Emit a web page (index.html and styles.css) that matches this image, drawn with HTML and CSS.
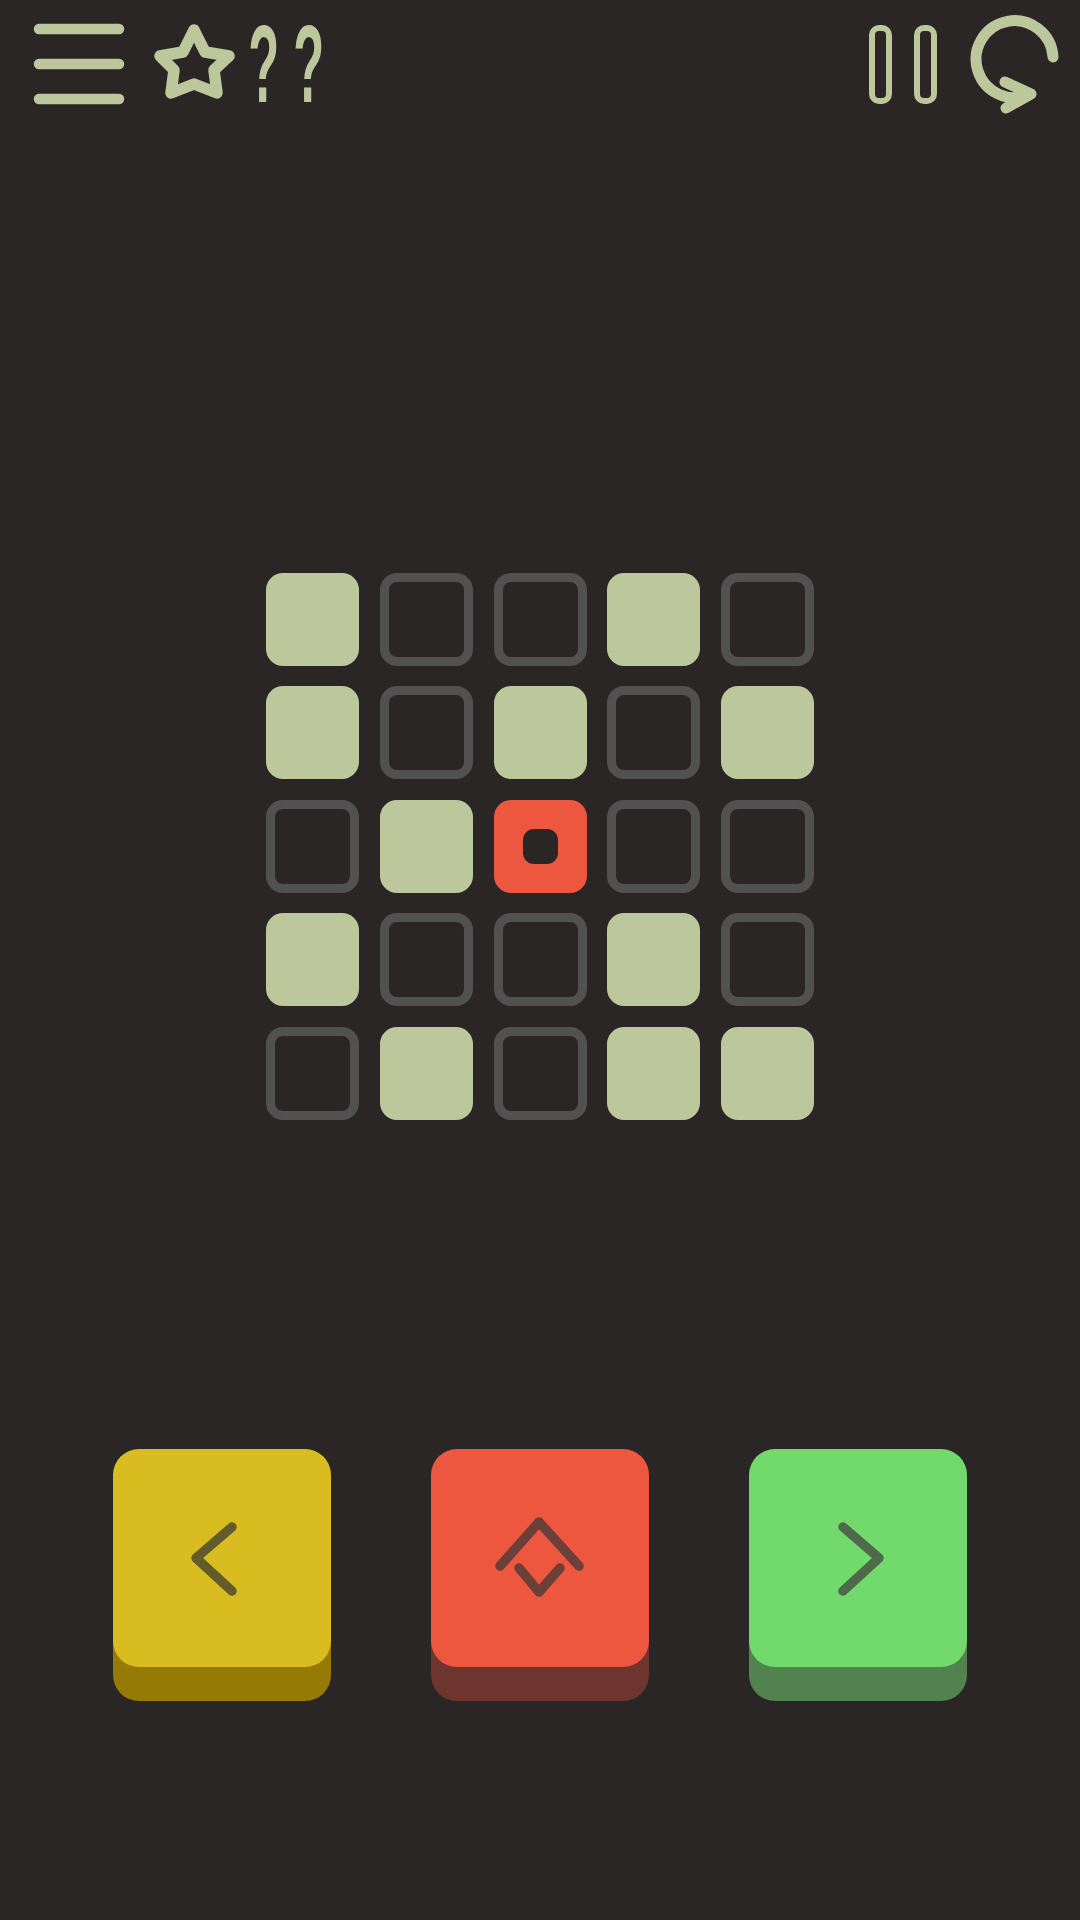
FILE: index.html
```html
<!DOCTYPE html>
<html lang="en">
<head>
    <meta charset="UTF-8">
    <meta name="viewport" content="width=device-width, initial-scale=1.0">
    <title>Puzzle</title>
    <link rel="stylesheet" href="styles.css">
</head>
<body>
    <header class="topbar">
        <div class="topbar-left">
            <svg class="icon-menu" width="135" height="130" viewBox="0 0 135 130">
                <path d="M39 29H119M39 64H119M39 99H119" />
            </svg>
            <svg class="icon-star" width="100" height="130" viewBox="145 0 100 130">
                <path d="M194 30L205 52L229 56L214 70L217 93L194 84L171 93L174 70L160 56L183 52Z" />
            </svg>
            <div class="hints"><span>?</span><span>?</span></div>
        </div>
        <div class="topbar-right">
            <div class="pause"><span></span><span></span></div>
            <svg class="icon-replay" width="120" height="130" viewBox="960 0 120 130">
                <path d="M1053 57A38.5 38.5 0 1 0 1031 94M1005 82L1031 94L1006 108" />
            </svg>
        </div>
    </header>

    <main class="board">
        <div class="cell on"></div>
        <div class="cell"></div>
        <div class="cell"></div>
        <div class="cell on"></div>
        <div class="cell"></div>

        <div class="cell on"></div>
        <div class="cell"></div>
        <div class="cell on"></div>
        <div class="cell"></div>
        <div class="cell on"></div>

        <div class="cell"></div>
        <div class="cell on"></div>
        <div class="cell player"><span class="player-dot"></span></div>
        <div class="cell"></div>
        <div class="cell"></div>

        <div class="cell on"></div>
        <div class="cell"></div>
        <div class="cell"></div>
        <div class="cell on"></div>
        <div class="cell"></div>

        <div class="cell"></div>
        <div class="cell on"></div>
        <div class="cell"></div>
        <div class="cell on"></div>
        <div class="cell on"></div>
    </main>

    <section class="controls">
        <button class="key key-yellow" aria-label="Left">
            <svg width="218" height="218" viewBox="0 0 218 218"><path d="M119 78L83 109L119 142" /></svg>
        </button>
        <button class="key key-red" aria-label="Flip">
            <svg width="218" height="218" viewBox="0 0 218 218"><path d="M69 117L108 73L148 117M88 119L108 143L129 119" /></svg>
        </button>
        <button class="key key-green" aria-label="Right">
            <svg width="218" height="218" viewBox="0 0 218 218"><path d="M94 78L130 109L94 142" /></svg>
        </button>
    </section>
</body>
</html>
```

FILE: styles.css
```css
body {
    margin: 0;
    height: 1920px;
    overflow: hidden;
    background-color: #2b2626;
    font-family: 'Liberation Sans', Arial, sans-serif;
}

svg {
    display: block;
}

svg path {
    fill: none;
    stroke-linecap: round;
    stroke-linejoin: round;
}

.topbar {
    display: flex;
    justify-content: space-between;
    height: 130px;
}
.topbar-left,
.topbar-right {
    display: flex;
}
.icon-menu path {
    stroke: #bcc79c;
    stroke-width: 10.5;
}
.icon-star {
    margin-left: 10px;
}
.icon-star path {
    stroke: #bcc79c;
    stroke-width: 11.5;
}
.hints {
    display: flex;
    margin-left: -9px;
    height: 130px;
}
.hints span {
    width: 45px;
    height: 130px;
    line-height: 128px;
    text-align: center;
    font-weight: bold;
    font-size: 110px;
    color: #bcc79c;
    transform: scaleX(0.46);
}

.pause {
    display: flex;
    gap: 22px;
    padding-top: 25px;
    margin-right: 23px;
}
.pause span {
    display: block;
    box-sizing: border-box;
    width: 23px;
    height: 79px;
    border: 6.5px solid #bcc79c;
    border-radius: 10px;
}
.icon-replay path {
    stroke: #bcc79c;
    stroke-width: 11;
}

.board {
    display: grid;
    grid-template-columns: repeat(5, 93px);
    grid-auto-rows: 93px;
    column-gap: 20.75px;
    row-gap: 20.5px;
    padding-left: 266px;
    margin-top: 442.6px;
}
.cell {
    box-sizing: border-box;
    border: 9px solid #515151;
    border-radius: 17px;
}
.cell.on {
    border: none;
    background-color: #bcc79c;
}
.cell.player {
    display: flex;
    align-items: center;
    justify-content: center;
    border: none;
    background-color: #ee573f;
}
.player-dot {
    width: 35px;
    height: 35px;
    border-radius: 11px;
    background-color: #2b2626;
}

.controls {
    display: flex;
    justify-content: center;
    gap: 100px;
    margin-top: 329px;
}
.key {
    width: 218px;
    height: 218px;
    padding: 0;
    border: none;
    border-radius: 26px;
}
.key path {
    stroke-width: 9.5;
}
.key-yellow {
    background-color: #d9bc1f;
    box-shadow: 0 34px 0 #957a06;
}
.key-yellow path {
    stroke: #625c2c;
}
.key-red {
    background-color: #ee573f;
    box-shadow: 0 34px 0 #6e352e;
}
.key-red path {
    stroke: #6b4039;
}
.key-green {
    background-color: #72da6c;
    box-shadow: 0 34px 0 #52834e;
}
.key-green path {
    stroke: #4f6a4a;
}
```
